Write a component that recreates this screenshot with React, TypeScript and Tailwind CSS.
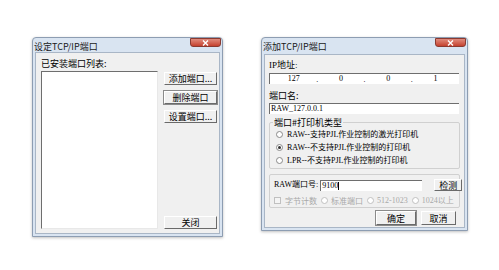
import React from 'react';

const cjk = '"Noto Sans CJK SC", "Liberation Sans", sans-serif';
const song = '"Liberation Serif", "Noto Sans CJK SC", serif';

const CloseBtn: React.FC = () => (
  <div className="w-[31px] h-[9px] rounded-b-[3px] border border-[#8a3a30] bg-gradient-to-b from-[#e08a7c] to-[#c4402e] flex items-center justify-center">
    <svg width="7" height="6" viewBox="0 0 7 6">
      <path d="M1 0.5 L6 5.5 M6 0.5 L1 5.5" stroke="#fff" strokeWidth="1.4" />
    </svg>
  </div>
);

const Btn: React.FC<{ label: string; w: string; h?: string; focus?: boolean }> = ({ label, w, h = 'h-[13px]', focus }) => (
  <div
    className={`${w} ${h} flex items-center justify-center bg-[#f0f0f0] border-t border-l border-t-[#fff] border-l-[#fff] border-b-[1.5px] border-r-[1.5px] border-b-[#6a6a6a] border-r-[#6a6a6a] text-[9px] leading-none text-black whitespace-nowrap ${focus ? 'shadow-[0_0_0_1px_#8a8a8a]' : ''}`}
  >
    {label}
  </div>
);

const Radio: React.FC<{ checked?: boolean; disabled?: boolean }> = ({ checked, disabled }) => (
  <div className={`w-[7px] h-[7px] rounded-full border ${disabled ? 'border-[#c0c0c0]' : 'border-[#8a8a8a]'} bg-white flex items-center justify-center shrink-0`}>
    {checked && <div className="w-[3px] h-[3px] rounded-full bg-[#333]" />}
  </div>
);

const Dialog: React.FC<{ title: string; w: string; h: string; children: React.ReactNode }> = ({ title, w, h, children }) => (
  <div className={`${w} ${h} flex flex-col bg-[#d9e4f1] border border-[#8d9db2] rounded-t-[4px] shadow-[0_1px_3px_rgba(0,0,0,0.25)]`}>
    <div className="h-[16px] flex items-start justify-between pl-[1px] pr-[1px]">
      <span className="text-[9px] leading-none mt-[4px] text-[#1a1a1a]" style={{ fontFamily: cjk }}>{title}</span>
      <CloseBtn />
    </div>
    <div className="flex-1 mx-[2px] mb-[2px] bg-[#f0f0f0] border border-[#a9b6c6] flex flex-col">
      {children}
    </div>
  </div>
);

export default function App() {
  return (
    <div className="w-[499px] h-[270px] bg-white flex items-start overflow-hidden" style={{ fontFamily: cjk }}>
      {/* 设定TCP/IP端口 */}
      <div className="ml-[32px] mt-[37px]">
        <Dialog title="设定TCP/IP端口" w="w-[191px]" h="h-[200px]">
          <div className="flex-1 flex pl-[5px] pt-[6px] pb-[4px] pr-[4px]">
            <div className="flex flex-col">
              <span className="text-[9px] leading-none h-[9px] text-black">已安装端口列表:</span>
              <div className="mt-[3px] w-[117px] h-[158px] bg-white border-t border-l border-t-[#6e6e6e] border-l-[#6e6e6e] border-b border-r border-b-[#e8e8e8] border-r-[#e8e8e8]" />
            </div>
            <div className="ml-[6px] flex flex-col pt-[13px]">
              <Btn label="添加端口..." w="w-[53px]" />
              <div className="mt-[6px]"><Btn label="删除端口" w="w-[53px]" focus /></div>
              <div className="mt-[6px]"><Btn label="设置端口..." w="w-[53px]" /></div>
              <div className="mt-auto"><Btn label="关闭" w="w-[53px]" /></div>
            </div>
          </div>
        </Dialog>
      </div>

      {/* 添加TCP/IP端口 */}
      <div className="ml-[38px] mt-[37px]">
        <Dialog title="添加TCP/IP端口" w="w-[207px]" h="h-[194px]">
          <div className="flex-1 flex flex-col pl-[4px] pr-[7px] pt-[6px] text-[9px] leading-none text-black">
            <span className="h-[9px]" style={{ fontFamily: song }}>IP地址:</span>
            <div className="mt-[3px] w-[190px] h-[11px] bg-white border-t border-l border-t-[#6e6e6e] border-l-[#6e6e6e] grid grid-cols-4" style={{ fontFamily: song }}>
              {['127', '0', '0', '1'].map((v, i) => (
                <div key={i} className="relative flex items-center justify-center text-[8px]">
                  {v}
                  {i < 3 && <span className="absolute right-[-1px] top-[2px] text-[8px]">.</span>}
                </div>
              ))}
            </div>
            <span className="mt-[7px] h-[9px]">端口名:</span>
            <div className="mt-[3px] w-[190px] h-[11px] bg-white border-t border-l border-t-[#6e6e6e] border-l-[#6e6e6e] flex items-center pl-[1px] text-[8px]" style={{ fontFamily: song }}>
              RAW_127.0.0.1
            </div>

            {/* group 1 */}
            <div className="relative mt-[8px] w-[191px] h-[47px] border border-[#d0d0d0] rounded-[2px] flex flex-col pl-[6px] pt-[7px] gap-[4px] text-[8px]" style={{ fontFamily: song }}>
              <span className="absolute left-[3px] top-[-5px] px-[1px] bg-[#f0f0f0] text-[9px]" style={{ fontFamily: cjk }}>端口#打印机类型</span>
              <div className="flex items-center gap-[4px] h-[9px]"><Radio /><span>RAW--支持PJL作业控制的激光打印机</span></div>
              <div className="flex items-center gap-[4px] h-[9px]"><Radio checked /><span>RAW--不支持PJL作业控制的打印机</span></div>
              <div className="flex items-center gap-[4px] h-[9px]"><Radio /><span>LPR--不支持PJL作业控制的打印机</span></div>
            </div>

            {/* group 2 */}
            <div className="mt-[5px] w-[191px] h-[34px] border border-[#d0d0d0] rounded-[2px] flex flex-col pl-[4px] pt-[4px]">
              <div className="flex items-center h-[12px]">
                <span style={{ fontFamily: song }} className="text-[8px] whitespace-nowrap">RAW端口号:</span>
                <div className="ml-[2px] w-[102px] h-[11px] bg-white border-t border-l border-t-[#6e6e6e] border-l-[#6e6e6e] flex items-center pl-[1px] text-[8px] shrink-0" style={{ fontFamily: song }}>
                  9100<span className="w-px h-[8px] bg-black" />
                </div>
                <div className="ml-[12px]"><Btn label="检测" w="w-[28px]" h="h-[12px]" /></div>
              </div>
              <div className="mt-[5px] flex items-center h-[9px] text-[#a8a8a8] text-[8px] whitespace-nowrap">
                <div className="w-[7px] h-[7px] border border-[#c0c0c0] bg-[#f4f4f4] mr-[4px]" />
                <span>字节计数</span>
                <div className="ml-[4px] mr-[3px]"><Radio disabled /></div>
                <span>标准端口</span>
                <div className="ml-[4px] mr-[3px]"><Radio disabled /></div>
                <span style={{ fontFamily: song }}>512-1023</span>
                <div className="ml-[4px] mr-[3px]"><Radio disabled /></div>
                <span style={{ fontFamily: song }}>1024以上</span>
              </div>
            </div>

            <div className="mt-[3px] flex justify-end gap-[5px] pr-[1px]">
              <Btn label="确定" w="w-[40px]" h="h-[14px]" focus />
              <Btn label="取消" w="w-[35px]" h="h-[14px]" />
            </div>
          </div>
        </Dialog>
      </div>
    </div>
  );
}
